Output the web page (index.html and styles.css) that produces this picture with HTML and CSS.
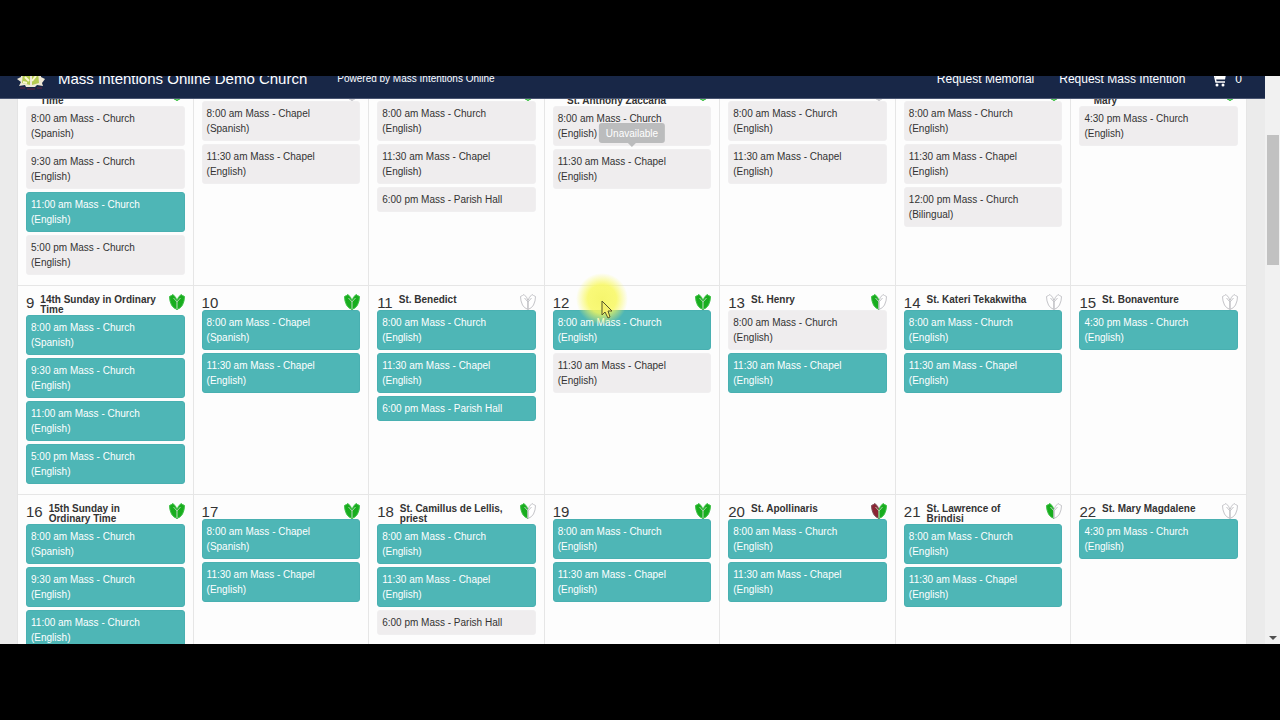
FILE: index.html
```html
<!DOCTYPE html>
<html lang="en">
<head>
  <meta charset="UTF-8">
  <meta name="viewport" content="width=device-width, initial-scale=1.0">
  <title>Mass Intentions Online Demo Church</title>
  <link rel="stylesheet" href="styles.css">
</head>
<body>
  <!-- Shared icons -->
  <svg class="sprite" aria-hidden="true">
    <symbol id="leafLeft" viewBox="0 0 16 16">
      <path d="M0.5 2.5 L2.5 1.5 L4 0.5 Q7 3 8 6.5 V15.5 Q4 14 2.5 11 Q0.5 7 0.5 2.5Z"/>
    </symbol>
    <symbol id="leafRight" viewBox="0 0 16 16">
      <path d="M15.5 2.5 L13.5 1.5 L12 0.5 Q9 3 8 6.5 V15.5 Q12 14 13.5 11 Q15.5 7 15.5 2.5Z"/>
    </symbol>
    <symbol id="leafVein" viewBox="0 0 16 16">
      <path d="M8 15 V8 L4.5 4 M8 8 L11.5 4" fill="none"/>
    </symbol>
  </svg>

  <div class="screen">
    <div class="page">
      <!-- Top navigation -->
      <nav class="navbar">
        <svg class="logo" viewBox="0 0 28 22" aria-hidden="true">
          <path d="M4 2 H24 L24 9 L28 11 L25 15 L26 18 L20 17 L18 19 L9 19 L8 17 L2 18 L4 14 L0 11 L4 9Z" fill="#efe9d6"/>
          <path d="M6 4 H13 V17 L5 15Z M15 4 H21 L22 15 L15 17Z" fill="#b5cb52"/>
          <path d="M8 9 L12 13 M19 8 L15 13 M6 14 L10 15" stroke="#fbf7d0" stroke-width="2"/>
          <path d="M3 20 H8 M10 21 H18 M20 20 H25" stroke="#6b2440"/>
        </svg>
        <a class="brand" href="#">Mass Intentions Online Demo Church</a>
        <a class="powered" href="#">Powered by Mass Intentions Online</a>
        <a class="nav-link first" href="#">Request Memorial</a>
        <a class="nav-link" href="#">Request Mass Intention</a>
        <a class="cart" href="#" aria-label="Cart">
          <svg viewBox="0 0 16 16" aria-hidden="true">
            <path d="M0 2 H3 L5 11 H14" fill="none" stroke="#fff" stroke-width="1.5"/>
            <path d="M3.5 3.5 H15 L14 8.5 H5Z" fill="#fff"/>
            <circle cx="6" cy="14" r="1.5" fill="#fff"/>
            <circle cx="12" cy="14" r="1.5" fill="#fff"/>
          </svg>
          <span>0</span>
        </a>
      </nav>

      <!-- Filled by the script below -->
      <main class="calendar" id="calendar"></main>
    </div>

    <!-- Scrollbar -->
    <div class="scrollbar" aria-hidden="true">
      <div class="thumb"></div>
      <div class="arrow"></div>
    </div>
  </div>

  <script src="calendar.js"></script>
</body>
</html>
```
FILE: styles.css
```css
* {
  box-sizing: border-box;
}
body {
  margin: 0;
  padding: 76px 0;
  height: 100vh;
  background: #000;
  color: #333;
  font-family: "Liberation Sans", Arial, sans-serif;
  font-size: 10px;
}
.sprite {
  display: none;
}
.screen {
  display: flex;
  height: 100%;
  overflow: hidden;
  background: #ebebeb;
}
.page {
  flex: 1;
  min-width: 0;
}

/* Navigation */
.navbar {
  position: relative;
  z-index: 5;
  display: flex;
  align-items: center;
  height: 42px;
  margin-top: -19px;
  padding: 2px 23px 0 17px;
  background: #182747;
  border-bottom: 1px solid #4a5672;
}
.navbar a {
  color: #fff;
  text-decoration: none;
}
.logo {
  width: 28px;
  height: 22px;
  margin-right: 13px;
}
.brand {
  font-size: 15px;
}
.powered {
  margin-left: 30px;
}
.nav-link {
  margin-left: 25px;
  font-size: 12px;
}
.nav-link.first {
  margin-left: auto;
}
.cart {
  display: flex;
  align-items: center;
  gap: 8px;
  margin-left: 26px;
  font-size: 12px;
}
.cart svg {
  width: 16px;
  height: 16px;
}

/* Calendar grid */
.calendar {
  display: grid;
  grid-template-columns: repeat(7, 1fr);
  grid-auto-rows: minmax(209px, auto);
  margin: -22px 18px 0 17px;
  background: #fdfdfd;
  border-left: 1px solid #e4e4e4;
}
.day {
  position: relative;
  padding: 9px 8px 0;
  border-right: 1px solid #e6e6e6;
  border-bottom: 1px solid #e6e6e6;
}
.day-head {
  display: flex;
  align-items: flex-start;
  min-height: 15px;
}
.day-number {
  margin-right: 6px;
  font-size: 15px;
  line-height: 15px;
}
.day-title {
  flex: 1;
  margin: 0;
  font-size: 10px;
  line-height: 10px;
}
.leaf {
  flex: none;
  width: 16px;
  height: 16px;
  margin: -1px 0 -1px 8px;
  overflow: visible;
}
.leaf .green {
  fill: #18ad1e;
  stroke: #3cc044;
}
.leaf .red {
  fill: #8c2434;
  stroke: #7d5058;
}
.leaf .empty {
  fill: #fff;
  stroke: #c4c4c8;
}
.leaf .vein {
  stroke: #a9cfa9;
}
.leaf .empty ~ .vein {
  stroke: #c4c4c8;
}

/* Mass times */
.mass {
  position: relative;
  display: block;
  width: 100%;
  margin: 0 0 3px;
  padding: 4px 20px 4px 4px;
  border: 1px solid #f0eff0;
  border-radius: 3px;
  background: #efedee;
  color: #333;
  font-family: inherit;
  font-size: 10px;
  line-height: 15px;
  text-align: left;
  cursor: pointer;
}
.mass.open {
  background: #4eb6b6;
  border-color: #49b0b1;
  color: #fff;
}
.tooltip {
  position: absolute;
  bottom: 100%;
  left: 50%;
  margin-bottom: 7px;
  padding: 3px 7px 2px;
  border-radius: 3px;
  background: #bbbcbd;
  color: #fff;
  transform: translateX(-50%);
}
.tooltip::after {
  content: "";
  position: absolute;
  top: 100%;
  left: 50%;
  margin-left: -4px;
  border: 4px solid transparent;
  border-top-color: #bbbcbd;
}

/* Pointer with highlight */
.pointer {
  position: absolute;
  z-index: 4;
  top: -13px;
  left: 31px;
  width: 52px;
  height: 52px;
  border-radius: 50%;
  background: radial-gradient(closest-side, #f5f55ae0 0, #f8f85ad0 55%, #ffff7800 100%);
  pointer-events: none;
}
.pointer svg {
  display: block;
  width: 12px;
  height: 20px;
  margin: 27px 0 0 25px;
}

/* Scrollbar */
.scrollbar {
  display: flex;
  flex-direction: column;
  justify-content: space-between;
  align-items: center;
  width: 15px;
  padding: 59px 0 4px;
  background: #f1f1f1;
}
.thumb {
  width: 12px;
  height: 130px;
  background: #c1c1c1;
}
.arrow {
  border: 4px solid transparent;
  border-top-color: #505050;
  border-bottom: 0;
}
```
FILE: calendar.js
```js
const EN = "(English)";
const ES = "(Spanish)";

// Mass entry: text, then whether it can still be requested
const open = (text) => ({ text, open: true });
const full = (text) => ({ text, open: false });

const sunday = (status) => [
  status[0]("8:00 am Mass - Church " + ES),
  status[1]("9:30 am Mass - Church " + EN),
  status[2]("11:00 am Mass - Church " + EN),
  status[3]("5:00 pm Mass - Church " + EN)
];

const days = [
  { n: 2, title: "13th Sunday in Ordinary Time", leaf: ["green", "green"], masses: sunday([full, full, open, full]) },
  { n: 3, title: "", leaf: ["empty", "empty"], masses: [full("8:00 am Mass - Chapel " + ES), full("11:30 am Mass - Chapel " + EN)] },
  { n: 4, title: "", leaf: ["green", "green"], masses: [full("8:00 am Mass - Church " + EN), full("11:30 am Mass - Chapel " + EN), full("6:00 pm Mass - Parish Hall")] },
  { n: 5, title: "St. Elizabeth;<br>St. Anthony Zaccaria", leaf: ["green", "green"], masses: [full("8:00 am Mass - Church " + EN), { text: "11:30 am Mass - Chapel " + EN, tip: "Unavailable" }] },
  { n: 6, title: "", leaf: ["empty", "empty"], masses: [full("8:00 am Mass - Church " + EN), full("11:30 am Mass - Chapel " + EN)] },
  { n: 7, title: "", leaf: ["green", "green"], masses: [full("8:00 am Mass - Church " + EN), full("11:30 am Mass - Chapel " + EN), full("12:00 pm Mass - Church (Bilingual)")] },
  { n: 8, title: "Blessed Virgin<br>Mary", leaf: ["green", "green"], masses: [full("4:30 pm Mass - Church " + EN)] },

  { n: 9, title: "14th Sunday in Ordinary Time", leaf: ["green", "green"], masses: sunday([open, open, open, open]) },
  { n: 10, title: "", leaf: ["green", "green"], masses: [open("8:00 am Mass - Chapel " + ES), open("11:30 am Mass - Chapel " + EN)] },
  { n: 11, title: "St. Benedict", leaf: ["empty", "empty"], masses: [open("8:00 am Mass - Church " + EN), open("11:30 am Mass - Chapel " + EN), open("6:00 pm Mass - Parish Hall")] },
  { n: 12, title: "", leaf: ["green", "green"], pointer: true, masses: [open("8:00 am Mass - Church " + EN), full("11:30 am Mass - Chapel " + EN)] },
  { n: 13, title: "St. Henry", leaf: ["green", "empty"], masses: [full("8:00 am Mass - Church " + EN), open("11:30 am Mass - Chapel " + EN)] },
  { n: 14, title: "St. Kateri Tekakwitha", leaf: ["empty", "empty"], masses: [open("8:00 am Mass - Church " + EN), open("11:30 am Mass - Chapel " + EN)] },
  { n: 15, title: "St. Bonaventure", leaf: ["empty", "empty"], masses: [open("4:30 pm Mass - Church " + EN)] },

  { n: 16, title: "15th Sunday in Ordinary Time", leaf: ["green", "green"], masses: sunday([open, open, open, open]) },
  { n: 17, title: "", leaf: ["green", "green"], masses: [open("8:00 am Mass - Chapel " + ES), open("11:30 am Mass - Chapel " + EN)] },
  { n: 18, title: "St. Camillus de Lellis, priest", leaf: ["green", "empty"], masses: [open("8:00 am Mass - Church " + EN), open("11:30 am Mass - Chapel " + EN), full("6:00 pm Mass - Parish Hall")] },
  { n: 19, title: "", leaf: ["green", "green"], masses: [open("8:00 am Mass - Church " + EN), open("11:30 am Mass - Chapel " + EN)] },
  { n: 20, title: "St. Apollinaris", leaf: ["red", "green"], masses: [open("8:00 am Mass - Church " + EN), open("11:30 am Mass - Chapel " + EN)] },
  { n: 21, title: "St. Lawrence of Brindisi", leaf: ["green", "empty"], masses: [open("8:00 am Mass - Church " + EN), open("11:30 am Mass - Chapel " + EN)] },
  { n: 22, title: "St. Mary Magdalene", leaf: ["empty", "empty"], masses: [open("4:30 pm Mass - Church " + EN)] }
];

// Vestment colour icon, each half has its own colour
function leafIcon(colors) {
  return `<svg class="leaf" viewBox="0 0 16 16" aria-hidden="true">
    <use href="#leafLeft" class="${colors[0]}"/>
    <use href="#leafRight" class="${colors[1]}"/>
    <use href="#leafVein" class="vein"/>
  </svg>`;
}

function massButton(mass) {
  const tip = mass.tip ? `<span class="tooltip" role="tooltip">${mass.tip}</span>` : "";
  return `<button type="button" class="mass${mass.open ? " open" : ""}">${mass.text}${tip}</button>`;
}

const pointer = `<div class="pointer" aria-hidden="true"><svg viewBox="0 0 12 20">
  <path d="M1 1 V15 L4 12 L7 18 L9 17 L7 11 H11Z" fill="#f5f06a" stroke="#55552a"/>
</svg></div>`;

document.getElementById("calendar").innerHTML = days.map((day) => `
  <section class="day">
    <div class="day-head">
      <span class="day-number">${day.n}</span>
      <h3 class="day-title">${day.title}</h3>
      ${leafIcon(day.leaf)}
    </div>
    ${day.masses.map(massButton).join("")}
    ${day.pointer ? pointer : ""}
  </section>`).join("");
```
